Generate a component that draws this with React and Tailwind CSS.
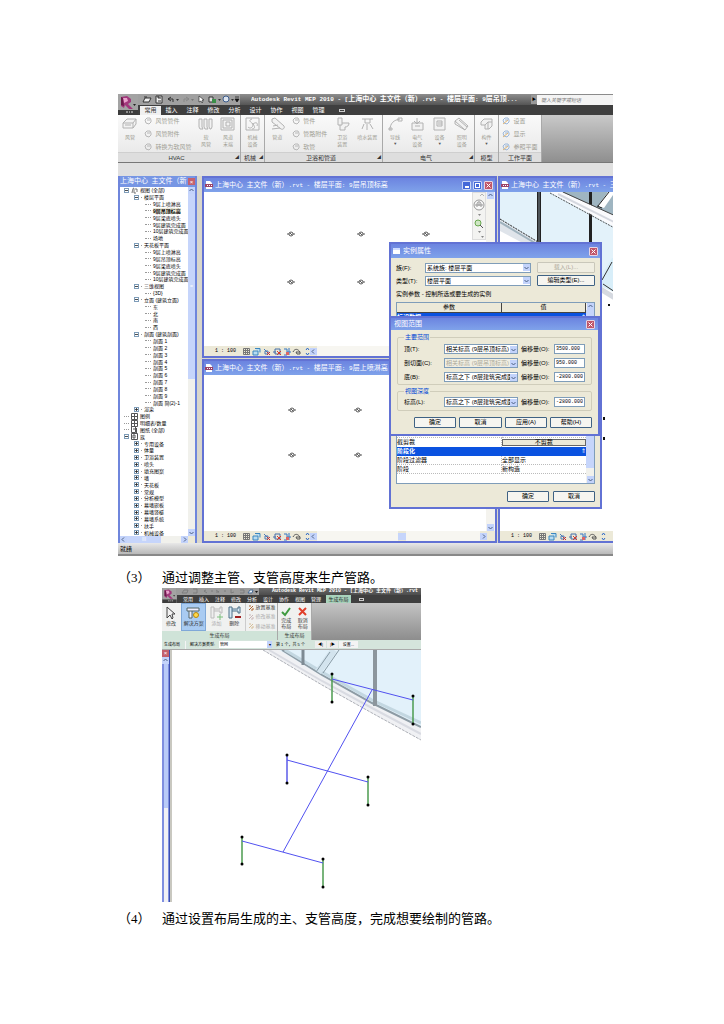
const HVAC_ROWS = ["风管管件", "风管附件", "转换为软风管"];

const ribbonTabs = ["常用", "插入", "注释", "修改", "分析", "设计", "协作", "视图", "管理"];

const treeRows = [
  { level: 0, text: "视图 (全部)", box: "-", icon: "views" },
  { level: 1, text: "楼层平面", box: "-" },
  { level: 2, text: "9层上喷淋高" },
  { level: 2, text: "9层吊顶标高", active: true },
  { level: 2, text: "9层梁底喷头" },
  { level: 2, text: "9层建筑完成面" },
  { level: 2, text: "10层建筑完成面" },
  { level: 2, text: "场地" },
  { level: 1, text: "天花板平面", box: "-" },
  { level: 2, text: "9层上喷淋高" },
  { level: 2, text: "9层吊顶标高" },
  { level: 2, text: "9层梁底喷头" },
  { level: 2, text: "9层建筑完成面" },
  { level: 2, text: "10层建筑完成面" },
  { level: 1, text: "三维视图", box: "-" },
  { level: 2, text: "{3D}" },
  { level: 1, text: "立面 (建筑立面)", box: "-" },
  { level: 2, text: "东" },
  { level: 2, text: "北" },
  { level: 2, text: "南" },
  { level: 2, text: "西" },
  { level: 1, text: "剖面 (建筑剖面)", box: "-" },
  { level: 2, text: "剖面 1" },
  { level: 2, text: "剖面 2" },
  { level: 2, text: "剖面 3" },
  { level: 2, text: "剖面 4" },
  { level: 2, text: "剖面 5" },
  { level: 2, text: "剖面 6" },
  { level: 2, text: "剖面 7" },
  { level: 2, text: "剖面 8" },
  { level: 2, text: "剖面 9" },
  { level: 2, text: "剖面 简(2)-1" },
  { level: 1, text: "渲染", box: "+" },
  { level: 0, text: "图例", icon: "grid" },
  { level: 0, text: "明细表/数量", icon: "grid" },
  { level: 0, text: "图纸 (全部)", icon: "sheet" },
  { level: 0, text: "族", box: "-", icon: "family" },
  { level: 1, text: "专用设备", box: "+" },
  { level: 1, text: "体量", box: "+" },
  { level: 1, text: "卫浴装置", box: "+" },
  { level: 1, text: "喷头", box: "+" },
  { level: 1, text: "填充图案", box: "+" },
  { level: 1, text: "墙", box: "+" },
  { level: 1, text: "天花板", box: "+" },
  { level: 1, text: "常规", box: "+" },
  { level: 1, text: "分析模型", box: "+" },
  { level: 1, text: "幕墙嵌板", box: "+" },
  { level: 1, text: "幕墙竖梃", box: "+" },
  { level: 1, text: "幕墙系统", box: "+" },
  { level: 1, text: "扶手", box: "+" },
  { level: 1, text: "机械设备", box: "+" },
];

const rangeRows = [
  { id: "top", label: "顶(T):", value: "相关标高 (9层吊顶标高)", offset: "3500.000" },
  { id: "cut", label: "剖切面(C):", value: "相关标高 (9层吊顶标高)", offset: "950.000", disabled: true },
  { id: "bottom", label: "底(B):", value: "标高之下 (8层建筑完成面)", offset: "-2800.000" },
];

// Latin runs are set in a fixed-width face one step smaller than the Chinese
function Mixed({ children }) {
  return children.split(/([\x20-\x7e]+)/).map((part, i) =>
    i % 2 ? (
      <span key={i} className="font-['Liberation_Mono',monospace] text-[6px] whitespace-pre">
        {part}
      </span>
    ) : (
      part
    )
  );
}

function AppButton({ className }) {
  return (
    <button type="button" aria-label="应用程序菜单" className={`shrink-0 bg-[#8d8d8d] ${className}`}>
      <svg viewBox="0 0 20 21" className="h-full w-full">
        <rect width="20" height="21" fill="#a3a3a3" />
        <rect y="16" width="20" height="5" fill="#3c3c3c" />
        <path d="M3 3l6-1 4 3 0 3-3 2 5 5-4 0-4-4-1 3-3-2z" fill="#a2387c" />
        <path d="M5 4l4 0 1 3-4 2z" fill="#e9a3cd" />
        <path d="M3 3l2 1 1 8-3-1z" fill="#6d1a4c" />
        <path d="M15 10h3l-1.500 2z" fill="#222" />
        <path d="M8 18h2m1 0h1m1 0h2" stroke="#ddd" />
      </svg>
    </button>
  );
}

function QuickAccess() {
  return (
    <svg viewBox="0 0 100 11" className="h-full w-[100px] shrink-0">
      <path d="M3 8l2-4h6l-2 4zM4 3h3" fill="#eee" stroke="#333" />
      <path d="M16 2h6v7h-6zM18 2v2h3M18 7h3" fill="#eee" stroke="#333" />
      <path d="M31 3l-3 2 3 2M28 5h5v3" fill="none" stroke="#333" />
      <path d="M36 5h3l-1.500 2z" fill="#333" />
      <path d="M46 3l3 2-3 2M49 5h-5v3" fill="none" stroke="#888" />
      <path d="M51 5h3l-1.500 2z" fill="#777" />
      <path d="M59 2v6l2-1 1 2 1-1-1-2h2z" fill="#fff" stroke="#333" strokeWidth=".7" />
      <path d="M69 3h4v5h-4z" fill="#ddd" stroke="#333" />
      <path d="M72 5h4v4h-4z" fill="#3a8f48" />
      <path d="M78 5h3l-1.500 2z" fill="#333" />
      <circle cx="86" cy="5" r="3" fill="#dde4ee" stroke="#3b5c8c" />
      <path d="M91 5h3l-1.500 2z" fill="#333" />
      <path d="M95 5h4l-2 3zM95 3h4" fill="#111" stroke="#111" strokeWidth=".7" />
    </svg>
  );
}

const shapes = {
  duct: "M1 6l4-4h9l-3 4zM1 6v5h10V6M11 11l3-4V2M3 8h6",
  flex: "M1 2h3v8l1 2H2l-1-2zM6 2h3v8l1 2H7l-1-2zM11 2h3v8l-1 2h-1l-1-2z",
  air: "M1 1h13v12H1zM3 3h9v8H3zM6 5h4v4H6z",
  fan: "M1 1h13v12H1zM8 7c-4-3-4-4-1-5M8 7c4-3 5 0 4 2M8 7c0 4-3 5-5 3M8 7c3 4 1 5-1 5",
  pipe: "M2 2l3-1 9 8c1 2-1 4-3 3L2 5zM3 9l5-1M2 12l8-1",
  toilet: "M3 1h4v7H3zM7 6h7c0 3-2 4-4 4v3H5V8",
  spray: "M2 2h11M5 2v4h5V2M4 7l-2 5M7 7v6M10 7l3 5",
  wire: "M2 13C2 6 6 3 12 2M1 11h3v2H1zM10 1h4v3h-4z",
  device: "M2 6h11v7H2zM7 1v6M4 4l3 3 3-3M5 9h5",
  outlet: "M2 1h11v12H2zM5 4h5v5H5zM7 5v3M9 5v3",
  light: "M1 4l4-3 9 8-3 4zM1 4v3l10 6M5 3l8 7",
  part: "M2 5l3-3h8v7l-3 3H6V8H2zM6 8l3-3h4M9 5v7",
  cursor: "M4 1v11l3-3 2 4 1-1-1-4h3z",
};

const openShapes = ["wire", "fan", "spray"];

function Glyph({ name, className = "", color = "#b2b2b2" }) {
  return (
    <svg
      viewBox="0 0 15 14"
      className={`h-[14px] w-[15px] shrink-0 ${className}`}
      fill={openShapes.includes(name) ? "none" : "#f2f2f2"}
      stroke={color}
    >
      <path d={shapes[name]} />
    </svg>
  );
}

function SmallGlyph({ tone = "gray" }) {
  return (
    <svg viewBox="0 0 8 8" className="h-[8px] w-[8px] shrink-0" fill="none" stroke={tone === "blue" ? "#9cb8dc" : "#b8b8b8"}>
      <path d="M1 3l2-2h3l1 2v2l-2 2-3-1zM3 3h3" />
      {tone === "blue" && <path d="M1 7l5-4" stroke="#e2b673" />}
    </svg>
  );
}

function ToolButton({ icon, lines, arrow }) {
  return (
    <button type="button" className="flex flex-col items-center text-[5px] leading-[7px] text-[#a09e94]">
      <Glyph name={icon} className="mb-[3px]" />
      {lines.map((line) => (
        <span key={line}>{line}</span>
      ))}
      {arrow && <span className="text-[4px] leading-[5px] text-[#555]">▼</span>}
    </button>
  );
}

function SmallTools({ items, tone }) {
  return (
    <div className="flex h-full flex-col justify-between pb-px text-[6px] leading-[8px] text-[#a09e94]">
      {items.map((item) => (
        <button key={item} type="button" className="flex items-center gap-[3px] whitespace-nowrap">
          <SmallGlyph tone={tone} />
          {item}
        </button>
      ))}
    </div>
  );
}

function RibbonPanel({ title, className, launcher, children }) {
  return (
    <section className={`flex shrink-0 flex-col border-r border-[#a9a9a9] bg-linear-to-b from-[#fafafa] to-[#e6e6e6] ${className}`}>
      <div className="flex h-[37px] items-start justify-around px-px pt-[2px]">{children}</div>
      <h3 className="flex h-[10px] items-center border-t border-[#cfcfcf] bg-[#dedede] text-[6px] leading-[8px] text-[#333]">
        <span className="flex-1 text-center">{title}</span>
        {launcher && <span className="pr-px text-[4px]">◢</span>}
      </h3>
    </section>
  );
}

function MainRibbon() {
  return (
    <header>
      <div className="flex h-[21px] bg-[#444]">
        <AppButton className="w-[20px]" />
        <div className="flex min-w-0 flex-1 flex-col">
          <div className="flex h-[11px] items-center bg-linear-to-b from-[#8e8e8e] to-[#555]">
            <div className="h-full bg-[#a0a0a0] pl-[2px]">
              <QuickAccess />
            </div>
            <h2 className="ml-[11px] flex-1 overflow-hidden text-[7px] leading-[10px] font-bold whitespace-nowrap text-white">
              <Mixed>Autodesk Revit MEP 2010 - [上海中心 主文件（新）.rvt - 楼层平面: 9层吊顶...</Mixed>
            </h2>
            <span className="w-[6px] bg-[#999] text-center text-[4px] leading-[9px]">▶</span>
            <input
              aria-label="搜索"
              placeholder="键入关键字或短语"
              className="h-[10px] w-[76px] bg-[#f4f4f4] pl-[4px] text-[5px] leading-[10px] italic placeholder:text-[#777]"
            />
          </div>
          <nav className="flex h-[10px] items-end bg-[#3f3f3f] pl-[2px] text-[6px] leading-[9px] text-white">
            {ribbonTabs.map((tab, i) => (
              <button
                key={tab}
                type="button"
                className={`w-[21px] shrink-0 ${i === 0 ? "bg-[#f0f0f0] text-[#333]" : ""}`}
              >
                {tab}
              </button>
            ))}
            <span className="ml-[10px] mb-[3px] h-[3px] w-[6px] border border-[#ccc]" />
          </nav>
        </div>
      </div>
      <div className="flex h-[48px] border-b border-[#777] bg-linear-to-b from-[#c9c9c9] to-[#8f8f8f]">
        <RibbonPanel title="HVAC" launcher className="w-[123px]">
          <ToolButton icon="duct" lines={["风管"]} />
          <SmallTools items={HVAC_ROWS} />
          <ToolButton icon="flex" lines={["软", "风管"]} />
          <ToolButton icon="air" lines={["风道", "末端"]} />
        </RibbonPanel>
        <RibbonPanel title="机械" launcher className="w-[24px]">
          <ToolButton icon="fan" lines={["机械", "设备"]} />
        </RibbonPanel>
        <RibbonPanel title="卫浴和管道" launcher className="w-[118px]">
          <ToolButton icon="pipe" lines={["管道"]} />
          <SmallTools items={["管件", "管路附件", "软管"]} />
          <ToolButton icon="toilet" lines={["卫浴", "装置"]} />
          <ToolButton icon="spray" lines={["喷水装置"]} />
        </RibbonPanel>
        <RibbonPanel title="电气" launcher className="w-[92px]">
          <ToolButton icon="wire" lines={["导线"]} arrow />
          <ToolButton icon="device" lines={["电气", "设备"]} />
          <ToolButton icon="outlet" lines={["设备"]} arrow />
          <ToolButton icon="light" lines={["照明", "设备"]} />
        </RibbonPanel>
        <RibbonPanel title="模型" className="w-[24px]">
          <ToolButton icon="part" lines={["构件"]} arrow />
        </RibbonPanel>
        <RibbonPanel title="工作平面" className="w-[43px]">
          <SmallTools items={["设置", "显示", "参照平面"]} tone="blue" />
        </RibbonPanel>
      </div>
    </header>
  );
}

function TreeIcon({ name }) {
  return (
    <svg viewBox="0 0 7 7" className="h-[7px] w-[7px] shrink-0" fill="none" stroke="#555">
      {name === "views" && <path d="M1 6c1-6 2-6 2-3v3h2M4 2h2v3" strokeWidth=".8" />}
      {name === "grid" && <path d="M.5.5h6v6h-6zM.5 3.500h6M3.500.5v6" />}
      {name === "sheet" && <path d="M.5.5h4v6h-4zM5.500 2v5M2 3h2" />}
      {name === "family" && <path d="M.5.5h6v6h-6zM2 2v3h2V2z" />}
    </svg>
  );
}

function TreeBox({ sign }) {
  return (
    <svg viewBox="0 0 5 5" className="h-[5px] w-[5px] shrink-0" fill="#fff" stroke="#7f9db9">
      <rect x=".5" y=".5" width="4" height="4" />
      <path d={sign === "+" ? "M1 2.500h3M2.500 1v3" : "M1 2.500h3"} stroke="#222" strokeWidth=".8" />
    </svg>
  );
}

const indent = ["pl-[4px]", "pl-[14px]", "pl-[25px]"];

function TreeRow({ row }) {
  return (
    <li className={`flex min-h-0 flex-1 items-center gap-[2px] whitespace-nowrap ${indent[row.level]}`}>
      {row.box ? (
        <TreeBox sign={row.box} />
      ) : (
        <span className={`${row.level === 2 ? "w-[6px]" : "w-[5px]"} shrink-0 border-t border-dotted border-[#999]`} />
      )}
      {row.icon && <TreeIcon name={row.icon} />}
      {row.level === 1 && <span className="w-px shrink-0 border-t border-dotted border-[#999]" />}
      <span className={row.active ? "bg-[#ece9d8] font-bold" : ""}>{row.text}</span>
    </li>
  );
}

function CloseButton({ label = "关闭" }) {
  return (
    <button
      type="button"
      aria-label={label}
      className="flex h-[9px] w-[9px] shrink-0 items-center justify-center rounded-[1px] border border-[#e6d5e4] bg-[#c0566a]"
    >
      <svg viewBox="0 0 5 5" className="h-[5px] w-[5px]" stroke="#fff">
        <path d="M.5.5l4 4M4.500.5l-4 4" />
      </svg>
    </button>
  );
}

function ScrollButton({ dir }) {
  const paths = { up: "M1.500 4l2-2 2 2", down: "M1.500 3l2 2 2-2", left: "M4 1.500l-2 2 2 2", right: "M3 1.500l2 2-2 2" };
  return (
    <svg viewBox="0 0 7 7" className="h-[7px] w-[7px] shrink-0 bg-[#c3d3fb]" fill="none" stroke="#4d6185">
      <path d={paths[dir]} />
    </svg>
  );
}

function ProjectBrowser() {
  return (
    <aside className="flex h-[367px] w-[79px] shrink-0 flex-col border-x-2 border-[#6f86dc] bg-white">
      <h3 className="flex h-[11px] shrink-0 items-center justify-between bg-[#7796e4] text-[7px] leading-[10px] whitespace-nowrap text-white">
        <span>
          <Mixed>上海中心 主文件（新</Mixed>
        </span>
        <span className="flex h-[7px] w-[7px] items-center justify-center bg-[#c4616e] text-[6px] leading-[6px]">×</span>
      </h3>
      <div className="flex min-h-0 flex-1">
        <ul className="flex min-w-0 flex-1 flex-col overflow-hidden text-[5px] leading-[6px] text-black">
          {treeRows.map((row, i) => (
            <TreeRow key={i} row={row} />
          ))}
        </ul>
        <div className="flex w-[7px] flex-col bg-[#f1f1ec]">
          <ScrollButton dir="up" />
          <div className="flex h-[185px] items-center justify-center bg-[#c6d5fb] text-[5px] text-white">=</div>
          <div className="flex-1" />
          <ScrollButton dir="down" />
        </div>
      </div>
      <div className="flex h-[7px] shrink-0 bg-[#f1f1ec]">
        <ScrollButton dir="left" />
        <div className="w-[34px] bg-[#c6d5fb] text-center text-[5px] leading-[6px] text-white">III</div>
        <div className="flex-1" />
        <ScrollButton dir="right" />
        <span className="w-[7px] bg-[#ece9d8]" />
      </div>
    </aside>
  );
}

function ViewBar({ scale, children }) {
  return (
    <div className="flex h-[10px] shrink-0 items-center overflow-hidden bg-[#ece9d8]">
      <span className="w-[38px] shrink-0 pl-[11px] font-['Liberation_Mono',monospace] text-[5px] leading-[8px] whitespace-nowrap text-black">{scale}</span>
      <svg viewBox="0 0 68 9" className="h-[9px] w-[68px] shrink-0" fill="none">
        <path d="M1.500 1.500h6v6h-6zM1.500 3.500h6M1.500 5.500h6M3.500 1.500v6M5.500 1.500v6" stroke="#777" />
        <path d="M11 4h5v4h-5zM13 1.500h5v4" fill="#b7dcf2" stroke="#3b86bf" />
        <path d="M22 2l4 4M23 4h3v3h-3z" stroke="#4a79b5" />
        <path d="M25 5l3 3M28 5l-3 3" stroke="#c33" />
        <path d="M31 5h3M33 2h5v5h-5z" stroke="#456ea8" />
        <path d="M35 4l4 4M39 4l-4 4" stroke="#d43b30" />
        <path d="M42 2h3v6h-3M47 1v7M45 5h4" stroke="#3576c4" />
        <path d="M44 5h3v3h-3z" fill="#d66" />
        <path d="M51 5c2-4 5-3 7 0M54 5h4v2h-3z" stroke="#555" />
        <path d="M64 3l1.500-2L67 3M64 6l1.500 2L67 6" stroke="#2a67c8" />
      </svg>
      {children}
    </div>
  );
}

function MdiWindow({ title, controls, className = "", bar, children }) {
  return (
    <section className={`flex min-w-0 flex-col border-2 border-[#6272d4] bg-white ${className}`}>
      <h3 className="flex h-[14px] shrink-0 items-center gap-[2px] overflow-hidden bg-linear-to-b from-[#6c84e0] to-[#7fa2ea] pl-px text-[7px] leading-[10px] whitespace-nowrap text-white">
        <svg viewBox="0 0 8 8" className="h-[8px] w-[8px] shrink-0">
          <path d="M1 0h4l2 2v6H1z" fill="#fff" />
          <path d="M0 3h8v3H0z" fill="#9c4368" />
          <path d="M2 4.500h1m1 0h1m1 0h1" stroke="#fff" />
        </svg>
        <span className="min-w-0 flex-1 overflow-hidden">
          <Mixed>{title}</Mixed>
        </span>
        {controls && (
          <span className="flex gap-[2px] pr-[2px]">
            <button type="button" aria-label="最小化" className="flex h-[9px] w-[9px] items-end justify-center rounded-[1px] border border-[#c8d4f6] bg-[#4468d8] pb-px">
              <span className="h-[2px] w-[4px] bg-white" />
            </button>
            <button type="button" aria-label="最大化" className="flex h-[9px] w-[9px] items-center justify-center rounded-[1px] border border-[#c8d4f6] bg-[#4468d8]">
              <span className="h-[5px] w-[5px] border border-white" />
            </button>
            <CloseButton />
          </span>
        )}
      </h3>
      <div className="flex min-h-0 flex-1">{children}</div>
      {bar}
    </section>
  );
}

function PlanCanvas({ heads }) {
  return (
    <svg className="h-full min-w-0 flex-1" fill="none" stroke="#333">
      {heads.map(([x, y]) => (
        <g key={`${x}-${y}`}>
          <circle cx={x} cy={y} r="2" strokeWidth=".8" />
          <path d={`M${x - 4} ${y}h2M${x + 2} ${y}h2M${x - 1} ${y - 1}l2 2`} strokeWidth=".8" />
        </g>
      ))}
    </svg>
  );
}

function VerticalScroll() {
  return (
    <div className="flex w-[9px] shrink-0 flex-col items-center bg-[#f4f3ee]">
      <ScrollButton dir="up" />
      <div className="flex-1" />
      <ScrollButton dir="down" />
    </div>
  );
}

function NavigationBar() {
  return (
    <svg viewBox="0 0 14 48" className="h-[48px] w-[14px] shrink-0" fill="none" stroke="#999">
      <rect x=".5" y=".5" width="13" height="47" fill="#f3f3f1" stroke="#ddd" />
      <path d="M8 4l2-2 2 2" strokeWidth=".7" />
      <circle cx="7" cy="13" r="5" fill="#fafafa" />
      <path d="M5 12c0-3 4-3 4 0v3M5 12v3M7 10v4M3 13h8" />
      <path d="M6 22h3l-1.500 2z" fill="#888" stroke="none" />
      <circle cx="6" cy="31" r="3" fill="#cfe6c4" stroke="#69a84f" />
      <path d="M8 33l3 3" stroke="#555" />
      <path d="M6 39h3l-1.500 2z" fill="#888" stroke="none" />
      <path d="M9 44h3l-1.500 2z" fill="#888" stroke="none" />
    </svg>
  );
}

function FacadeView() {
  return (
    <svg className="h-full min-w-0 flex-1">
      <path d="M0 0H120V102L104 88 35 50 0 28z" fill="#e3f2fa" />
      <path d="M60 0H120V27z" fill="#9fb5c1" />
      <path d="M37 0h4v52h-4zM89 0h3v60h-3z" fill="#222" />
      <path d="M39 0v52" stroke="#7a8790" />
      <path d="M0 28L40 51V60L0 39z" fill="#dfe4ea" />
      <path d="M0 30L40 54" stroke="#9fb2bd" strokeWidth="2" />
      <path d="M0 27L38 50" stroke="#222" strokeDasharray="2 1" />
      <path d="M50 0H62L120 26V38z" fill="#fbfbfd" />
      <path d="M50 1L120 39" stroke="#555" strokeDasharray="2 1" />
      <path d="M63 0L120 26" stroke="#444" />
      <path d="M58 2L120 33" stroke="#d5d8df" strokeWidth="2" />
      <path d="M108 0h7l-11 16-6-2z" fill="#fff" />
      <path d="M109 0l-11 14M97 14l5 2" stroke="#222" />
      <path d="M96 92L112 66H120V103z" fill="#d8eef9" />
      <path d="M102 88l10-18M103 92l12 8" stroke="#333" />
      <path d="M102 95L120 106V112L102 101z" fill="#d5d9e0" />
      <path d="M108 112h2v2h-2zM103 225h2v3h-2zM103 245h2v3h-2z" fill="#111" />
    </svg>
  );
}

function DropDown({ id, label, value, disabled, className }) {
  return (
    <span className={`flex h-[10px] shrink-0 items-center border border-[#7f9db9] ${disabled ? "bg-[#f0eee2]" : "bg-white"} ${className}`}>
      <select
        id={id}
        aria-label={label}
        disabled={disabled}
        className={`h-[8px] min-w-0 flex-1 appearance-none pl-px text-[6px] leading-[8px] ${disabled ? "text-[#aca899]" : "text-black"}`}
      >
        <option>{value}</option>
      </select>
      <ScrollButton dir="down" />
    </span>
  );
}

function DialogButton({ children, className, disabled }) {
  return (
    <button
      type="button"
      disabled={disabled}
      className={`h-[11px] rounded-[1px] border text-[6px] leading-[9px] whitespace-nowrap ${
        disabled ? "border-[#c9c7ba] bg-[#f0eee2] text-[#aca899]" : "border-[#3f6284] bg-[#f6f5f0] text-black"
      } ${className}`}
    >
      {children}
    </button>
  );
}

function OffsetInput({ id, value }) {
  return (
    <>
      <label htmlFor={id} className="ml-[3px] w-[33px] shrink-0 whitespace-nowrap">偏移量(O):</label>
      <input
        id={id}
        defaultValue={value}
        className="h-[10px] w-[31px] border border-[#7f9db9] bg-white px-px font-['Liberation_Mono',monospace] text-[5px] leading-[8px] text-black"
      />
    </>
  );
}

function InstanceProperties() {
  return (
    <div role="dialog" aria-label="实例属性" className="absolute top-[148px] left-[271px] w-[213px] border-2 border-[#6272d4] bg-[#ece9d8] text-[6px] leading-[8px] text-black">
      <h3 className="flex h-[14px] items-center gap-[3px] bg-linear-to-b from-[#6c84e0] to-[#7fa2ea] px-[2px] text-[7px] text-white">
        <span className="h-[6px] w-[7px] border-t-2 border-[#cfdcff] bg-white" />
        <span className="flex-1">实例属性</span>
        <CloseButton />
      </h3>
      <form className="px-[5px] pt-[4px] pb-[5px]">
        <div className="flex items-center">
          <label htmlFor="family" className="w-[29px]">族(F):</label>
          <DropDown id="family" value="系统族: 楼层平面" className="w-[106px]" />
          <DialogButton disabled className="ml-[6px] flex-1">载入(L)...</DialogButton>
        </div>
        <div className="mt-[2px] flex items-center">
          <label htmlFor="type" className="w-[29px]">类型(T):</label>
          <DropDown id="type" value="楼层平面" className="w-[106px]" />
          <DialogButton className="ml-[6px] flex-1">编辑类型(E)...</DialogButton>
        </div>
        <p className="my-[4px]">实例参数 - 控制所选或要生成的实例</p>
        <div className="flex h-[182px] border border-[#7f9db9] bg-white">
          <table className="h-fit flex-1 table-fixed border-collapse">
            <thead className="bg-[#ece9d8]">
              <tr className="h-[9px]">
                <th className="border-r border-b border-[#444] font-normal">参数</th>
                <th className="border-r border-b border-[#444] font-normal">值</th>
              </tr>
            </thead>
            <tbody>
              <tr className="h-[9px] bg-[#0a52e0] text-white">
                <td className="font-bold">标识数据</td>
                <td className="text-right">⇑</td>
              </tr>
              <tr className="h-[108px]">
                <td colSpan={2} />
              </tr>
              <tr className="h-[8px]">
                <td className="border-r border-b border-dotted border-[#bbb]">视图范围</td>
                <td className="border-b border-dotted border-[#bbb]">无</td>
              </tr>
              <tr className="h-[9px]">
                <td className="border-r border-dotted border-[#bbb]">截剪裁</td>
                <td>
                  <button type="button" className="block h-[7px] w-full border border-[#666] bg-[#ece9d8] leading-[5px]">不剪裁</button>
                </td>
              </tr>
              <tr className="h-[9px] bg-[#0a52e0] text-white">
                <td className="font-bold">阶段化</td>
                <td className="text-right">⇑</td>
              </tr>
              <tr className="h-[8px]">
                <td className="border-r border-b border-dotted border-[#bbb]">阶段过滤器</td>
                <td className="border-b border-dotted border-[#bbb]">全部显示</td>
              </tr>
              <tr className="h-[8px]">
                <td className="border-r border-b border-dotted border-[#bbb]">阶段</td>
                <td className="border-b border-dotted border-[#bbb]">新构造</td>
              </tr>
            </tbody>
          </table>
          <div className="flex w-[8px] flex-col items-center bg-[#f1f1ec]">
            <ScrollButton dir="up" />
            <div className="w-full flex-1 bg-[#c6d5fb]" />
            <div className="h-[8px]" />
            <ScrollButton dir="down" />
          </div>
        </div>
        <div className="mt-[7px] flex justify-end gap-[4px]">
          <DialogButton className="w-[42px]">确定</DialogButton>
          <DialogButton className="w-[42px]">取消</DialogButton>
        </div>
      </form>
    </div>
  );
}

function ViewRange() {
  return (
    <div role="dialog" aria-label="视图范围" className="absolute top-[222px] left-[271px] w-[211px] border-2 border-[#6272d4] bg-[#ece9d8] text-[6px] leading-[8px] text-black">
      <h3 className="flex h-[12px] items-center bg-linear-to-b from-[#6c84e0] to-[#7fa2ea] px-[3px] text-[7px] text-white">
        <span className="flex-1">视图范围</span>
        <CloseButton />
      </h3>
      <form className="px-[6px] pt-[3px] pb-[6px]">
        <fieldset className="rounded-[2px] border border-[#d0cdbb] px-[6px] pt-[3px] pb-[2px]">
          <legend className="px-px text-[#0046d5]">主要范围</legend>
          <div className="flex flex-col gap-[4px]">
            {rangeRows.map((row) => (
              <div key={row.id} className="flex items-center">
                <label htmlFor={row.id} className="w-[40px] shrink-0">{row.label}</label>
                <DropDown id={row.id} value={row.value} disabled={row.disabled} className="w-[74px]" />
                <OffsetInput id={`${row.id}-offset`} value={row.offset} />
              </div>
            ))}
          </div>
        </fieldset>
        <fieldset className="mt-[2px] rounded-[2px] border border-[#d0cdbb] px-[6px] pt-[2px] pb-[3px]">
          <legend className="px-px text-[#0046d5]">视图深度</legend>
          <div className="flex items-center">
            <label htmlFor="depth" className="w-[40px] shrink-0">标高(L):</label>
            <DropDown id="depth" value="标高之下 (8层建筑完成面)" className="w-[74px]" />
            <OffsetInput id="depth-offset" value="-2800.000" />
          </div>
        </fieldset>
        <div className="mt-[6px] flex justify-end gap-[3px]">
          <DialogButton className="w-[42px]">确定</DialogButton>
          <DialogButton className="w-[43px]">取消</DialogButton>
          <DialogButton className="w-[42px]">应用(A)</DialogButton>
          <DialogButton className="w-[42px]">帮助(H)</DialogButton>
        </div>
      </form>
    </div>
  );
}

function RevitScreen() {
  return (
    <figure className="relative overflow-hidden bg-[#e0e0e0] font-['Liberation_Sans','Noto_Sans_CJK_SC',sans-serif]">
      <MainRibbon />
      <div className="mt-[13px] flex bg-[#d9d7cc]">
        <ProjectBrowser />
        <div className="ml-[5px] flex min-w-0 flex-1 flex-col gap-px">
          <MdiWindow
            controls
            className="h-[182px]"
            title="上海中心 主文件（新）.rvt - 楼层平面: 9层吊顶标高"
            bar={
              <ViewBar scale="1 : 100">
                <ScrollButton dir="left" />
                <span className="h-full flex-1 bg-[#f7f6f1]" />
              </ViewBar>
            }
          >
            <PlanCanvas heads={[[87, 42], [157, 42], [222, 42], [87, 90], [157, 90]]} />
            <NavigationBar />
            <VerticalScroll />
          </MdiWindow>
          <MdiWindow
            className="h-[184px]"
            title="上海中心 主文件（新）.rvt - 楼层平面: 9层上喷淋高"
            bar={
              <ViewBar scale="1 : 100">
                <ScrollButton dir="left" />
                <span className="h-full flex-1 bg-[#f7f6f1]" />
                <span className="h-[7px] w-[8px] bg-[#c6d5fb]" />
                <span className="h-full w-[74px] bg-[#f7f6f1]" />
                <ScrollButton dir="right" />
                <span className="w-[8px]" />
              </ViewBar>
            }
          >
            <PlanCanvas heads={[[88, 35], [154, 35], [88, 80], [154, 80]]} />
            <VerticalScroll />
          </MdiWindow>
        </div>
        <MdiWindow
          className="ml-px w-[115px] shrink-0 border-r-0"
          title="上海中心 主文件（新）.rvt - 三"
          bar={<ViewBar scale="1 : 100" />}
        >
          <FacadeView />
        </MdiWindow>
      </div>
      <footer className="flex h-[13px] items-center border-b-2 border-[#888] bg-linear-to-b from-[#e8e8e8] to-[#b9b9b9] pl-[2px] text-[6px] leading-[8px] text-black">
        就绪
      </footer>
      <InstanceProperties />
      <ViewRange />
    </figure>
  );
}

function TinyTool({ color, label, className = "" }) {
  return (
    <button type="button" className={`flex items-center gap-[2px] whitespace-nowrap ${className}`}>
      <svg viewBox="0 0 6 6" className="h-[6px] w-[6px]" fill="none" stroke={color}>
        <path d="M1 5l4-4M1 1h2M5 3v2H3" />
      </svg>
      {label}
    </button>
  );
}

function LayoutRibbon() {
  return (
    <header>
      <div className="flex h-[15px] bg-[#444]">
        <AppButton className="w-[15px]" />
        <div className="flex min-w-0 flex-1 flex-col">
          <div className="flex h-[7px] items-center overflow-hidden bg-linear-to-b from-[#6b6b6b] to-[#4c4c4c]">
            <div className="h-full w-[82px] shrink-0 bg-[#9c9c9c] pl-px">
              <svg viewBox="0 0 80 7" className="h-[7px] w-[80px]" fill="none" stroke="#777">
                <path d="M4 5l2-3h4l-1 3zM15 1h4v4h-4M28 2l-2 1 3 2M33 3h2M38 2l3 2h-3M46 3h2M53 1v4l3-1M62 2h4v3h-4" stroke="#777" strokeWidth=".8" />
                <path d="M70 5l2-3h3l-1 3z" fill="#eaf2fa" stroke="#4a6d94" />
                <path d="M77 3h3l-1.500 2z" fill="#111" stroke="none" />
              </svg>
            </div>
            <h2 className="ml-[13px] font-['Liberation_Mono','Noto_Sans_CJK_SC',monospace] text-[5px] leading-[7px] font-bold whitespace-nowrap text-white">
              Autodesk Revit MEP 2010 - [上海中心 主文件（新）.rvt
            </h2>
          </div>
          <nav className="flex h-[8px] items-end bg-[#3f3f3f] pl-[3px] text-[5px] leading-[8px] text-white">
            {ribbonTabs.map((tab) => (
              <button key={tab} type="button" className="w-[16px] shrink-0">
                {tab}
              </button>
            ))}
            <button type="button" className="ml-[2px] w-[25px] shrink-0 bg-[#a9d3bd] text-[#222]">生成布局</button>
            <span className="mb-[2px] ml-[8px] h-[3px] w-[5px] border border-[#ccc]" />
          </nav>
        </div>
      </div>
      <div className="flex h-[37px] bg-linear-to-b from-[#c4c4c4] to-[#8d8d8d] text-[5px] leading-[7px] text-[#333]">
        <section className="flex w-[116px] shrink-0 flex-col border-r border-[#a9a9a9] bg-[#f0f1f0]">
          <div className="flex h-[28px] justify-around">
            <button type="button" className="flex flex-col items-center pt-[3px]">
              <Glyph name="cursor" color="#444" />
              修改
            </button>
            <button type="button" className="flex w-[25px] flex-col items-center border border-[#7fa8d8] bg-[#a9cbf2] pt-[2px] whitespace-nowrap">
              <svg viewBox="0 0 15 14" className="h-[14px] w-[15px]" fill="#eef" stroke="#566">
                <path d="M1 2h12v3H1zM3 5v7h3V5" />
                <circle cx="10" cy="9" r="2.500" fill="#ffd84a" stroke="#b8860b" />
              </svg>
              解决方案
            </button>
            <button type="button" className="flex flex-col items-center pt-[3px] text-[#aaa]">
              <svg viewBox="0 0 15 14" className="h-[14px] w-[15px]" fill="#eee" stroke="#bbb">
                <path d="M2 1h3v11H2zM5 3h6V1h2v6h-2V5H5" />
                <path d="M8 11h6M11 8v6" stroke="#7cc07c" />
              </svg>
              添加
            </button>
            <button type="button" className="flex flex-col items-center pt-[3px]">
              <svg viewBox="0 0 15 14" className="h-[14px] w-[15px]" fill="#d8e9f5" stroke="#4c7188">
                <path d="M2 1h3v11H2zM5 3h6V1h2v6h-2V5H5" />
                <path d="M8 11h6" stroke="#a02020" strokeWidth="2" />
              </svg>
              删除
            </button>
            <div className="flex flex-col justify-around border-l border-[#ccc] pl-[2px]">
              <TinyTool color="#b0662f" label="放置基准" />
              <TinyTool color="#c9b5b5" label="修改基准" className="text-[#aaa]" />
              <TinyTool color="#d5bd96" label="移动基准" className="text-[#aaa]" />
            </div>
          </div>
          <h3 className="h-[9px] bg-[#cfe3d8] text-center leading-[9px]">生成布局</h3>
        </section>
        <section className="flex w-[34px] shrink-0 flex-col border-r border-[#a9a9a9] bg-[#f0f1f0]">
          <div className="flex h-[28px] justify-around">
            <button type="button" className="flex flex-col items-center pt-[2px] leading-[6px]">
              <svg viewBox="0 0 10 12" className="h-[12px] w-[10px]" fill="none" stroke="#3f9a3f" strokeWidth="2">
                <path d="M1 7l3 3 5-7" />
              </svg>
              <span>完成</span>
              <span>布局</span>
            </button>
            <button type="button" className="flex flex-col items-center pt-[2px] leading-[6px]">
              <svg viewBox="0 0 10 12" className="h-[12px] w-[10px]" fill="none" stroke="#e0402c" strokeWidth="2">
                <path d="M1 3l7 7M8 3l-7 7" />
              </svg>
              <span>取消</span>
              <span>布局</span>
            </button>
          </div>
          <h3 className="h-[9px] bg-[#cfe3d8] text-center leading-[9px] whitespace-nowrap">生成布局</h3>
        </section>
      </div>
      <div className="flex h-[10px] items-center overflow-hidden border-b border-[#aaa] bg-[#d5e5dc] pl-[2px] text-[4px] leading-[8px] whitespace-nowrap text-black">
        <span className="w-[22px] border-r border-[#f4f4f4]">生成布局</span>
        <label htmlFor="solution" className="ml-[4px] w-[29px]">解决方案类型:</label>
        <select id="solution" className="h-[7px] w-[48px] appearance-none bg-white pl-px text-[4px] leading-[7px]">
          <option>管网</option>
        </select>
        <span className="h-[7px] w-[5px] bg-[#c3d3fb] text-center leading-[7px]">▾</span>
        <span className="ml-[4px] w-[37px]">第 1 个，共 5 个</span>
        <button type="button" className="ml-[2px] h-[7px] w-[11px] bg-[#eee] leading-[7px]">◀|</button>
        <button type="button" className="ml-px h-[7px] w-[11px] bg-[#eee] leading-[7px]">|▶</button>
        <button type="button" className="ml-px h-[7px] w-[19px] bg-[#f4f4f4] leading-[7px]">设置...</button>
      </div>
    </header>
  );
}

const pipeHeads = [
  [160, 24, 52], [241, 46, 74], [115, 105, 133], [196, 127, 155], [70, 187, 214], [151, 209, 237],
];

function PipeDrawing() {
  return (
    <svg className="h-[252px] min-w-0 flex-1 bg-white" fill="none">
      <path d="M106 0H249V78L200 55 150 27z" fill="#e2f1fa" />
      <path d="M91 0L150 35 200 63 249 90V78L200 54 150 26 107 0z" fill="#f0f1f4" />
      <path d="M91 0L150 35 200 63 249 90" stroke="#aeb1b8" strokeDasharray="3 1" />
      <path d="M97 0L150 31 200 58 249 84" stroke="#d9dbe2" strokeWidth="2" />
      <path d="M110 0L150 25 200 53 249 77" stroke="#8d9ba4" strokeWidth="2" />
      <path d="M113 0L150 22 200 50 249 73" stroke="#c3d7e1" strokeWidth="3" />
      <path d="M131 0V15" stroke="#7e8b94" strokeWidth="3" />
      <path d="M203 0V56" stroke="#8c969d" strokeWidth="4" />
      <path d="M162 0L146 22" stroke="#d3e4ee" strokeWidth="7" />
      <path d="M167 0L151 23M158 2L144 22" stroke="#8799a4" />
      {pipeHeads.map(([x, top, bottom], i) => (
        <g key={i}>
          <path d={`M${x} ${top}V${bottom}`} stroke={i === 2 ? "#5b5be8" : "#4b9b4f"} strokeWidth="1.500" />
          <circle cx={x} cy={top} r="1.500" fill="#000" />
          <circle cx={x} cy={bottom} r="1.500" fill="#000" />
        </g>
      ))}
      <path d="M160 29L241 50M200 40L111 202M115 110L196 132M70 191L151 213" stroke="#5151f0" />
    </svg>
  );
}

function LayoutScreen() {
  return (
    <figure className="mr-[192px] ml-[44px] overflow-hidden font-['Liberation_Sans','Noto_Sans_CJK_SC',sans-serif]">
      <LayoutRibbon />
      <div className="flex">
        <div className="flex w-[8px] shrink-0 flex-col border-r border-[#3c4fb0] bg-[#7f8fe0]">
          <span className="h-[7px] bg-[#c4616e] text-center text-[6px] leading-[6px] text-white">×</span>
          <ScrollButton dir="up" />
          <span className="h-[144px] w-[4px] self-center bg-[#b9cbf8]" />
          <span className="w-[4px] flex-1 self-center bg-[#f1f1f5]" />
        </div>
        <div className="w-[2px] shrink-0 bg-[#c9c8c0]" />
        <PipeDrawing />
      </div>
    </figure>
  );
}

function Step({ number, children, className }) {
  return (
    <p className={`flex h-[20px] text-[13px] leading-[20px] text-black ${className}`}>
      <span className="w-[44px] shrink-0">（{number}）</span>
      <span>{children}</span>
    </p>
  );
}

function App() {
  return (
    <main className="min-h-screen bg-white pt-[94px] pr-[111px] pl-[118px] font-['Liberation_Serif','Noto_Sans_CJK_SC',serif]">
      <RevitScreen />
      <Step number="3" className="mt-[12px]">通过调整主管、支管高度来生产管路。</Step>
      <LayoutScreen />
      <Step number="4" className="mt-[7px]">通过设置布局生成的主、支管高度，完成想要绘制的管路。</Step>
    </main>
  );
}

export default App;
